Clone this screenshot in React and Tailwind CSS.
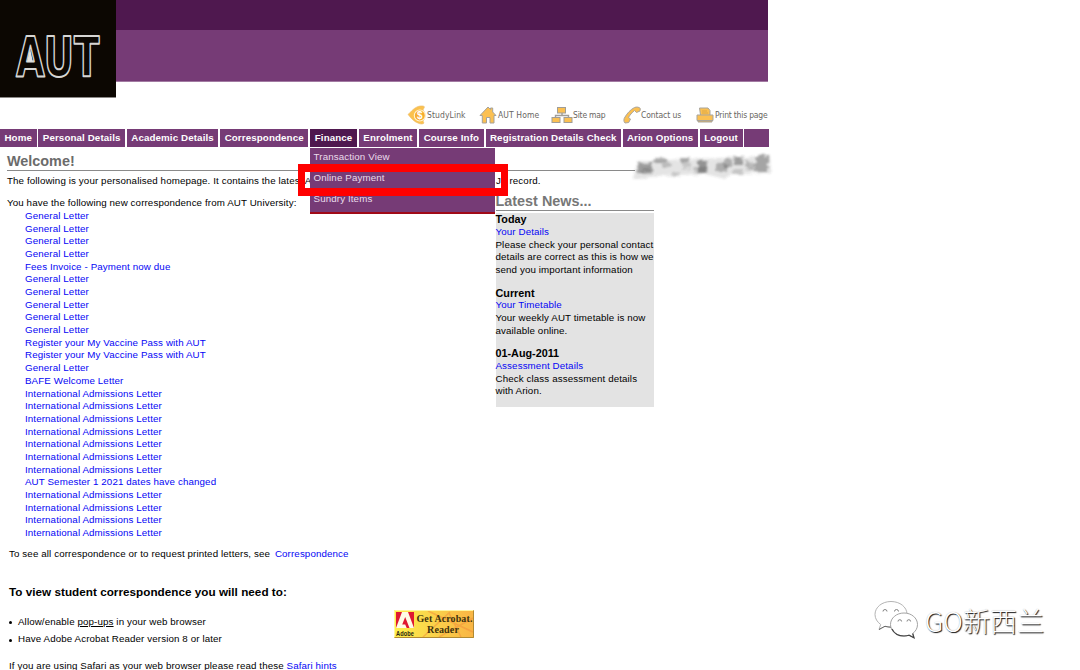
import React from 'react'

const navItems = [
  { label: 'Home', width: 'w-[36.5px]' },
  { label: 'Personal Details', width: 'w-[86.5px]' },
  { label: 'Academic Details', width: 'w-[91.5px]' },
  { label: 'Correspondence', width: 'w-[88px]' },
  { label: 'Finance', width: 'w-[47px]', active: true },
  { label: 'Enrolment', width: 'w-[58px]' },
  { label: 'Course Info', width: 'w-[65px]' },
  { label: 'Registration Details Check', width: 'w-[135px]' },
  { label: 'Arion Options', width: 'w-[75px]' },
  { label: 'Logout', width: 'w-[43px]' },
]

const financeMenu = ['Transaction View', 'Online Payment', 'Sundry Items']

const letters = [
  'General Letter',
  'General Letter',
  'General Letter',
  'General Letter',
  'Fees Invoice - Payment now due',
  'General Letter',
  'General Letter',
  'General Letter',
  'General Letter',
  'General Letter',
  'Register your My Vaccine Pass with AUT',
  'Register your My Vaccine Pass with AUT',
  'General Letter',
  'BAFE Welcome Letter',
  'International Admissions Letter',
  'International Admissions Letter',
  'International Admissions Letter',
  'International Admissions Letter',
  'International Admissions Letter',
  'International Admissions Letter',
  'International Admissions Letter',
  'AUT Semester 1 2021 dates have changed',
  'International Admissions Letter',
  'International Admissions Letter',
  'International Admissions Letter',
  'International Admissions Letter',
]

const news = [
  { date: 'Today', link: 'Your Details', lines: ['Please check your personal contact', 'details are correct as this is how we', 'send you important information'] },
  { date: 'Current', link: 'Your Timetable', lines: ['Your weekly AUT timetable is now', 'available online.'] },
  { date: '01-Aug-2011', link: 'Assessment Details', lines: ['Check class assessment details', 'with Arion.'] },
]

const Logo = () => (
  <svg className="block" width="116" height="98" viewBox="0 0 116 98">
    <rect width="116" height="98" fill="#0c0702" />
    <rect y="97" width="116" height="1" fill="#8b8886" />
    <text x="16" y="75.500" textLength="83.500" lengthAdjust="spacingAndGlyphs" fontFamily="DejaVu Sans" fontWeight="700" fontSize="55" fill="#0c0702" stroke="#d6d5d3" strokeWidth="2" strokeLinejoin="round">AUT</text>
    <path d="M30 48l2.800 13.500h-5.600z" fill="#e4e4e2" />
  </svg>
)

const StudyLinkIcon = () => (
  <svg width="20" height="20" viewBox="0 0 20 20">
    <path d="M1 9.500C4 7 7 2 13 1c2-.3 4.500 0 4.500 1L16 5c2.500 2 3 8 0 11l1 2c-1 1.500-4 1-5 .5C7 17 4 13 1 9.500z" fill="#fbc14e" stroke="#e9bd74" strokeWidth=".6" />
    <circle cx="12.800" cy="10.500" r="5.500" fill="#f8ad2c" stroke="#fff3d2" strokeWidth="1.100" />
    <text x="12.800" y="14" textAnchor="middle" fontFamily="Liberation Sans" fontWeight="700" fontSize="10" fill="#fff">$</text>
  </svg>
)

const HomeIcon = () => (
  <svg width="18" height="18" viewBox="0 0 18 18" fill="#fbc052" stroke="#a5a29b" strokeWidth="1" strokeLinejoin="round">
    <path d="M1 9.500L9 1l2.500 2.500V2h2.200v4L17 9.500h-2V17h-4v-5.500H7.500V17H3.300V9.500z" />
  </svg>
)

const SiteMapIcon = () => (
  <svg width="22" height="18" viewBox="0 0 22 18" fill="#fbc052" stroke="#a09d97" strokeWidth="1">
    <path d="M11 6v4M4.500 12v-2.500h13V12" fill="none" strokeWidth="1.400" />
    <rect x="6.500" y="1.500" width="8" height="5.500" />
    <rect x="1" y="11.500" width="8" height="5" />
    <rect x="13" y="11.500" width="8" height="5" />
  </svg>
)

const PhoneIcon = () => (
  <svg width="19" height="19" viewBox="0 0 19 19" fill="#fbc052" stroke="#aaa69f" strokeWidth="1" strokeLinejoin="round">
    <path d="M2 17c-1.500-1.500-1.500-4 0-6C4 7.500 7.500 3.500 11.500 1.500c2-.8 4.500-.6 5.800 1l-.3 2.500-3.500 1.500-2-2C9 6.500 6.500 9.500 5.500 11.500l2 1.500-1.800 3.500z" />
  </svg>
)

const PrintIcon = () => (
  <svg width="18" height="18" viewBox="0 0 18 18" fill="#fbc052" stroke="#a9a59c" strokeWidth="1" strokeLinejoin="round">
    <path d="M4.500 9L3.500 2h8.500l2 2.500V9" />
    <path d="M1 9h16v5.500H1z" />
    <path d="M2 14.500h14V16H2z" fill="#d6b06a" />
    <path d="M6 5h5M6 7h6" stroke="#dca844" />
  </svg>
)

const tools = [
  { label: 'StudyLink', icon: StudyLinkIcon, box: 'w-[72px]' },
  { label: 'AUT Home', icon: HomeIcon, box: 'w-[72px]', text: 'tracking-[0.1px] ml-px' },
  { label: 'Site map', icon: SiteMapIcon, box: 'w-[72px]', text: 'tracking-[-0.2px]' },
  { label: 'Contact us', icon: PhoneIcon, box: 'w-[73px]', text: 'tracking-[-0.1px] -ml-px' },
  { label: 'Print this page', icon: PrintIcon, box: 'w-[75px]', text: 'tracking-[-0.2px] ml-px' },
]

const smudges = [
  [3, 9, 15, 9, 0.45], [20, 4, 12, 5, 0.4], [8, 15, 12, 6, 0.25], [28, 7, 9, 6, 0.25],
  [46, 3, 9, 6, 0.4], [49, 9, 8, 6, 0.2], [64, 7, 9, 12, 0.5], [60, 13, 14, 5, 0.25],
  [38, 19, 8, 4, 0.2], [82, 10, 12, 8, 0.35], [90, 5, 8, 8, 0.35], [100, 2, 9, 9, 0.45],
  [99, 15, 10, 5, 0.2], [112, 8, 7, 7, 0.3], [122, 2, 13, 7, 0.4], [120, 9, 13, 9, 0.4],
]

// scribbled-out student name
const RedactedName = () => (
  <svg className="absolute left-[630px] top-[151px]" width="144" height="30" viewBox="0 0 144 30">
    <defs>
      <filter id="smear" x="-5%" y="-20%" width="110%" height="140%">
        <feTurbulence type="fractalNoise" baseFrequency="0.12 0.4" numOctaves="2" seed="4" />
        <feDisplacementMap in="SourceGraphic" scale="6" xChannelSelector="R" yChannelSelector="G" />
        <feGaussianBlur stdDeviation="0.9" />
      </filter>
    </defs>
    <rect x="5" y="8" width="136" height="14" fill="#fff" />
    <g filter="url(#smear)" fill="#444" transform="translate(4 3)">
      <path d="M3 7L136 2l1 17-40 1-6 5-20-5-48 2-24 4z" opacity=".14" />
      {smudges.map(([x, y, w, h, o], i) => <rect key={i} x={x} y={y} width={w} height={h} opacity={o} />)}
    </g>
  </svg>
)

const AcrobatBadge = () => (
  <svg className="block" width="80" height="28" viewBox="0 0 80 28">
    <defs>
      <linearGradient id="gold" x1="0" x2="1">
        <stop offset="0" stopColor="#fff04a" />
        <stop offset=".4" stopColor="#fbd84b" />
        <stop offset="1" stopColor="#f9b444" />
      </linearGradient>
    </defs>
    <rect width="80" height="28" fill="url(#gold)" />
    <path d="M29 27L56 2M34 1l45 21M55 3l12 24M45 27L79 8" stroke="#f28c3c" strokeWidth="1.500" opacity=".5" fill="none" />
    <path d="M.5 27.500V.5h79" stroke="#fff6a0" fill="none" />
    <path d="M.5 27.500h79V.5" stroke="#b18a32" fill="none" />
    <rect x="2" y="2" width="18" height="16" fill="#df1830" />
    <path d="M8 2h6l6 16h-4.500l-4.300-11-3 7.500h3l1.500 3.500H2z" fill="#fffbe5" />
    <text x="2" y="26" fontFamily="Liberation Sans" fontWeight="700" fontSize="7.500" textLength="18" lengthAdjust="spacingAndGlyphs" fill="#2c2510">Adobe</text>
    <g fontFamily="Liberation Serif" fontWeight="700" fontSize="10.500" fill="#40320c">
      <text x="22.500" y="12" textLength="56" lengthAdjust="spacingAndGlyphs">Get Acrobat.</text>
      <text x="33" y="23" textLength="32" lengthAdjust="spacingAndGlyphs">Reader</text>
    </g>
  </svg>
)

const Watermark = () => (
  <div className="absolute left-[874px] top-[600px] flex items-center">
    <svg width="46" height="42" viewBox="0 0 46 42" fill="#fff" stroke="#999" strokeWidth=".9">
      <path d="M17 1.500c-9 0-16 5.700-16 13 0 4 2.200 7.500 5.700 10L5 29.500l6-3.200c2 .6 4 .9 6 .9 9 0 16-5.700 16-12.900S26 1.500 17 1.500z" stroke="#aaa" />
      <path d="M5 29.500l6-3.200c2 .6 4 .9 6 .9" stroke="#555" />
      <path d="M30 13c-7.500 0-13.500 5-13.500 11.500S22.500 36 30 36c1.800 0 3.500-.3 5-.8l5 2.600-1.300-4.300c3-2.200 4.800-5.300 4.800-9C43.500 18 37.500 13 30 13z" />
      <path d="M18 29c2 4.200 6.500 7 12 7 1.800 0 3.500-.3 5-.8l5 2.600-1.300-4.300" fill="none" stroke="#444" strokeWidth="1.200" />
      <path d="M9 11.500a2 2 0 0 1 4 0M20.500 11.500a2 2 0 0 1 4 0M24 21.500a1.800 1.800 0 0 1 3.600 0M33 21.500a1.800 1.800 0 0 1 3.600 0" fill="none" stroke="#777" />
    </svg>
    <span className="ml-[5px] text-[27px] leading-[42px] font-light text-white whitespace-nowrap font-['Noto_Sans_CJK_SC',sans-serif] [text-shadow:1px_1px_1px_#111,0_0_1px_#bbb]">GO新西兰</span>
  </div>
)

const App = () => {
  return (
    <div className="relative w-[1080px] h-[670px] overflow-hidden bg-white text-black font-['Liberation_Sans',Arial,sans-serif] text-[9.75px] tracking-[0.115px] leading-[12.68px]">
      {/* Banner */}
      <header className="flex w-[768px] h-[98px]">
        <Logo />
        <div className="flex-1">
          <div className="h-[30px] bg-[#4f184f]" />
          <div className="h-[51.5px] bg-[#763b76] border-b border-[#a27aa2]" />
        </div>
      </header>

      {/* Quick links */}
      <div className="flex items-center h-[30.500px] pl-[407px] pt-[4px]">
        {tools.map(({ label, icon: Icon, box, text }) => (
          <div key={label} className={`flex items-center shrink-0 ${box}`}>
            <Icon />
            <span className={`text-[8.5px] text-[#696661] whitespace-nowrap font-['DejaVu_Sans_Condensed','DejaVu_Sans',sans-serif] ${text || 'tracking-[0.1px]'}`}>{label}</span>
          </div>
        ))}
      </div>

      {/* Main navigation */}
      <nav className="flex gap-[1.900px] h-[18.500px] w-[769px] font-bold text-white">
        {navItems.map((item) => (
          <div key={item.label} className={`relative flex items-center justify-center shrink-0 pt-px whitespace-nowrap ${item.width} ${item.active ? 'bg-[#4f184f]' : 'bg-[#763b76]'}`}>
            {item.label}
            {item.active && (
              <ul className="absolute left-0 top-[19.500px] z-10 w-[184.5px] h-[65.500px] bg-[#763b76] border-b-2 border-[#a00a18] font-normal text-[#eadcea]">
                {financeMenu.map((entry) => (
                  <li key={entry} className="h-[21px] pl-[3.500px] pt-[3px]">{entry}</li>
                ))}
              </ul>
            )}
          </div>
        ))}
        <div className="flex-1 bg-[#763b76]" />
      </nav>

      <main className="pl-[7px]">
        <h1 className="w-[640px] h-[23.500px] pt-[6px] border-b border-[#8a8a8a] text-[14.4px] leading-[16px] tracking-normal font-bold text-[#6b6b6b]">Welcome!</h1>
        <div className="flex pt-[4px] whitespace-pre">
          <p className="w-[489px]">The following is your personalised homepage. It contains the latest A</p>
          <p>J   record.</p>
        </div>

        <div className="flex">
          <div className="w-[488.5px] pt-[10px]">
            <p>You have the following new correspondence from AUT University:</p>
            <ul className="pl-[18px] text-[#0505f5]">
              {letters.map((letter, i) => <li key={i}>{letter}</li>)}
            </ul>
            <p className="pl-[2px] pt-[8px]">To see all correspondence or to request printed letters, see <a className="ml-[2px] text-[#0505f5]">Correspondence</a></p>
            <h2 className="pl-[2px] pt-[24px] text-[11.7px] leading-[15px] tracking-[0.03px] font-bold">To view student correspondence you will need to:</h2>
            <div className="flex pl-[2px] pt-[10.500px]">
              <ul className="w-[385px] pt-[3px] leading-[17.5px]">
                <li className="flex items-center gap-[6px]"><i className="mt-[2px] size-[3px] rounded-full bg-black" /><span>Allow/enable <u>pop-ups</u> in your web browser</span></li>
                <li className="flex items-center gap-[6px]"><i className="mt-[2px] size-[3px] rounded-full bg-black" /><span>Have Adobe Acrobat Reader version 8 or later</span></li>
              </ul>
              <AcrobatBadge />
            </div>
            <p className="pl-[2px] pt-[12.500px]">If you are using Safari as your web browser please read these <a className="text-[#0505f5]">Safari hints</a></p>
          </div>

          {/* News */}
          <aside className="w-[158.5px] pt-[5.500px] whitespace-nowrap">
            <h2 className="h-[18px] mb-[2px] border-b border-[#8a8a8a] text-[14.4px] leading-[17px] tracking-normal font-bold text-[#777]">Latest News...</h2>
            <div className="h-[194px] bg-[#e3e3e3]">
              {news.map((item) => (
                <section key={item.date} className="pt-[0.500px] mb-[9.5px]">
                  <h3 className="text-[10.8px] tracking-normal font-bold">{item.date}</h3>
                  <a className="block text-[#0505f5]">{item.link}</a>
                  {item.lines.map((line) => <p key={line}>{line}</p>)}
                </section>
              ))}
            </div>
          </aside>
        </div>
      </main>

      <RedactedName />

      {/* Highlight around Online Payment */}
      <div className="absolute z-20 left-[297.5px] top-[163.5px] w-[210.5px] h-[32px] border-x-[7px] border-y-8 border-[#ff0000]" />

      <Watermark />
    </div>
  )
}

export default App
